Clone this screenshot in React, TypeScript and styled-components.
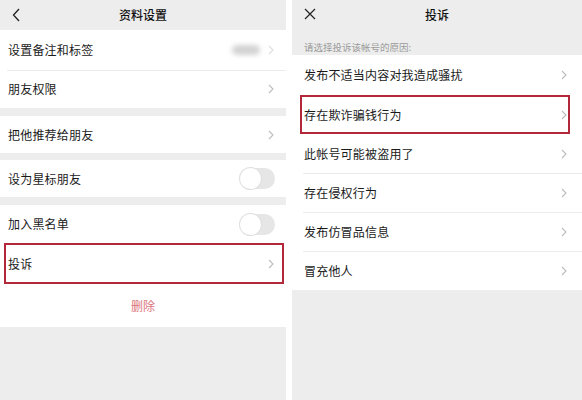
import React from "react";
import styled, { createGlobalStyle } from "styled-components";

const GlobalStyle = createGlobalStyle`
	* {
		box-sizing: border-box;
	}
	body {
		margin: 0;
		background: #ffffff;
		font-family: "Noto Sans CJK SC", "Noto Sans", sans-serif;
		color: #1a1a1a;
	}
`;

const Page = styled.div`
	display: flex;
	gap: 6px;
	width: 582px;
	height: 400px;
	overflow: hidden;
`;

const Screen = styled.div<{ $w: number }>`
	width: ${(p) => p.$w}px;
	height: 400px;
	background: #ededed;
	display: flex;
	flex-direction: column;
`;

const NavBar = styled.div`
	position: relative;
	height: 30px;
	display: flex;
	align-items: center;
	justify-content: center;
	background: #ededed;
`;

const NavTitle = styled.h1`
	margin: 0;
	font-size: 12px;
	font-weight: 500;
	line-height: 1;
	color: #111111;
`;

const NavIcon = styled.span`
	position: absolute;
	left: 12px;
	top: 8px;
	display: flex;
	color: #222222;
`;

const Group = styled.div<{ $gap?: number }>`
	background: #ffffff;
	margin-top: ${(p) => p.$gap ?? 0}px;
`;

const Row = styled.div<{ $h: number; $pl: number; $pr: number; $marked?: boolean; $line?: boolean }>`
	position: relative;
	height: ${(p) => p.$h}px;
	display: flex;
	align-items: center;
	justify-content: space-between;
	padding: 0 ${(p) => p.$pr}px 0 ${(p) => p.$pl}px;
	font-size: 12px;
	line-height: 1;
	&::before {
		content: "";
		display: ${(p) => (p.$line ? "block" : "none")};
		position: absolute;
		top: 0;
		left: ${(p) => p.$pl - 1}px;
		right: 0;
		height: 1px;
		background: #ececec;
	}
	&::after {
		content: "";
		display: ${(p) => (p.$marked ? "block" : "none")};
		position: absolute;
		inset: 0 2px 0 4px;
		border: 2px solid #b2283a;
	}
`;

const MarkedRow = styled(Row)`
	&::after {
		inset: 0 12px 0 8px;
	}
`;

const Label = styled.span`
	letter-spacing: 0.2px;
`;

const Blur = styled.span`
	display: flex;
	align-items: center;
	gap: 8px;
	& > i {
		display: block;
		width: 28px;
		height: 10px;
		border-radius: 5px;
		background: #d2d2d2;
		filter: blur(2.5px);
	}
	& > svg {
		opacity: 0.5;
	}
`;

const Toggle = styled.span`
	display: block;
	width: 35px;
	height: 21px;
	border-radius: 11px;
	background: #e6e6e6;
	position: relative;
	&::after {
		content: "";
		position: absolute;
		left: 0;
		top: 0;
		width: 21px;
		height: 21px;
		border-radius: 50%;
		background: #ffffff;
		box-shadow: 0 0 0 1px #e0e0e0;
	}
`;

const DeleteRow = styled.div`
	height: 43px;
	display: flex;
	align-items: center;
	justify-content: center;
	background: #ffffff;
	font-size: 12px;
	color: #dc727b;
`;

const Hint = styled.div`
	height: 25px;
	display: flex;
	align-items: flex-end;
	padding: 0 12px 2px;
	font-size: 9.5px;
	line-height: 12px;
	color: #9a9a9a;
`;

const Chevron = () => (
	<svg width="6" height="10" viewBox="0 0 6 10">
		<path d="M1 1l4 4-4 4" fill="none" stroke="#bdbdbd" strokeWidth="1.1" />
	</svg>
);

const BackIcon = () => (
	<svg width="8" height="14" viewBox="0 0 8 14">
		<path d="M7 1L1.5 7 7 13" fill="none" stroke="currentColor" strokeWidth="1.3" />
	</svg>
);

const CloseIcon = () => (
	<svg width="12" height="12" viewBox="0 0 12 12">
		<path d="M1 1l10 10M11 1L1 11" fill="none" stroke="currentColor" strokeWidth="1.2" />
	</svg>
);

const reasons = [
	"发布不适当内容对我造成骚扰",
	"存在欺诈骗钱行为",
	"此帐号可能被盗用了",
	"存在侵权行为",
	"发布仿冒品信息",
	"冒充他人",
];

export default function App() {
	return (
		<>
			<GlobalStyle />
			<Page>
				<Screen $w={286}>
					<NavBar>
						<NavIcon>
							<BackIcon />
						</NavIcon>
						<NavTitle>资料设置</NavTitle>
					</NavBar>
					<Group>
						<Row $h={40} $pl={8} $pr={12}>
							<Label>设置备注和标签</Label>
							<Blur>
								<i />
								<Chevron />
							</Blur>
						</Row>
						<Row $h={38} $pl={8} $pr={12} $line>
							<Label>朋友权限</Label>
							<Chevron />
						</Row>
					</Group>
					<Group $gap={8}>
						<Row $h={37} $pl={8} $pr={12}>
							<Label>把他推荐给朋友</Label>
							<Chevron />
						</Row>
					</Group>
					<Group $gap={7}>
						<Row $h={37} $pl={8} $pr={11}>
							<Label>设为星标朋友</Label>
							<Toggle />
						</Row>
					</Group>
					<Group $gap={8}>
						<Row $h={38} $pl={8} $pr={11}>
							<Label>加入黑名单</Label>
							<Toggle />
						</Row>
						<Row $h={41} $pl={8} $pr={12} $marked>
							<Label>投诉</Label>
							<Chevron />
						</Row>
					</Group>
					<DeleteRow>删除</DeleteRow>
				</Screen>
				<Screen $w={290}>
					<NavBar>
						<NavIcon>
							<CloseIcon />
						</NavIcon>
						<NavTitle>投诉</NavTitle>
					</NavBar>
					<Hint>请选择投诉该帐号的原因:</Hint>
					<Group>
						{reasons.map((text, index) =>
							index === 1 ? (
								<MarkedRow key={`REASON_${index}`} $h={39} $pl={12} $pr={15} $marked>
									<Label>{text}</Label>
									<Chevron />
								</MarkedRow>
							) : (
								<Row key={`REASON_${index}`} $h={index === 0 ? 40 : 39} $pl={12} $pr={15} $line={index > 2}>
									<Label>{text}</Label>
									<Chevron />
								</Row>
							)
						)}
					</Group>
				</Screen>
			</Page>
		</>
	);
}
